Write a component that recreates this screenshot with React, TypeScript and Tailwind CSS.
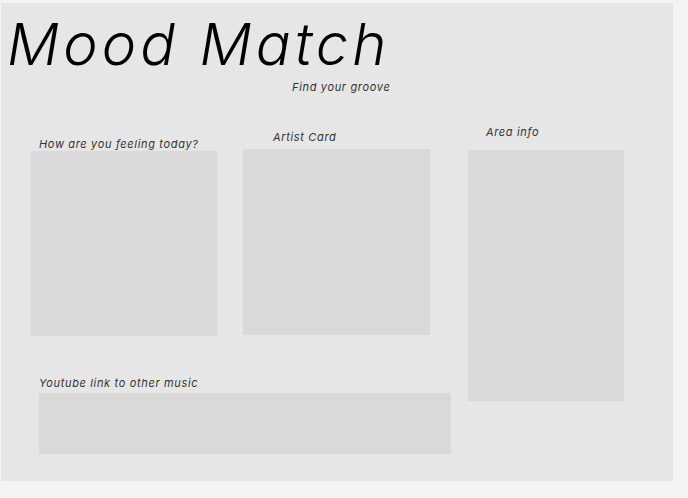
import React from 'react'

// Mood Match wireframe
const font = { fontFamily: 'Inter, "Noto Sans", sans-serif' }

const Label: React.FC<{ text: string; className?: string }> = ({ text, className = '' }) => (
  <p className={`text-[11px] leading-[12px] italic tracking-[0.06em] text-[#333333] ${className}`}>{text}</p>
)

export default function App() {
  return (
    <div className="min-h-screen w-full bg-[#f4f4f4] pt-[3px] pl-[1px]" style={font}>
      <div className="w-[672px] h-[478px] bg-[#e6e6e6] flex flex-col">
        {/* Header */}
        <div className="pt-[10px] pl-[6px]">
          <h1 className="text-[58px] leading-[62px] font-light italic tracking-[0.07em] text-black">Mood Match</h1>
          <p className="mt-[7px] ml-[285px] text-[11px] leading-[11px] italic tracking-[0.06em] text-[#333333]">
            Find your groove
          </p>
        </div>

        {/* Content */}
        <div className="mt-[33px] flex items-start">
          <div className="ml-[30px] flex flex-col">
            <div className="flex items-start">
              <div className="mt-[12px] w-[186px]">
                <Label text="How are you feeling today?" className="pl-[8px]" />
                <div className="mt-[1px] h-[185px] bg-[#d9d9d9]" />
              </div>
              <div className="ml-[26px] mt-[5px] w-[187px]">
                <Label text="Artist Card" className="pl-[30px]" />
                <div className="mt-[6px] h-[186px] bg-[#d9d9d9]" />
              </div>
            </div>
            <div className="mt-[41px] ml-[8px]">
              <Label text="Youtube link to other music" />
              <div className="mt-[4px] w-[412px] h-[61px] bg-[#d9d9d9]" />
            </div>
          </div>
          <div className="ml-[17px] w-[156px]">
            <Label text="Area info" className="pl-[18px]" />
            <div className="mt-[12px] h-[251px] bg-[#d9d9d9]" />
          </div>
        </div>
      </div>
    </div>
  )
}
